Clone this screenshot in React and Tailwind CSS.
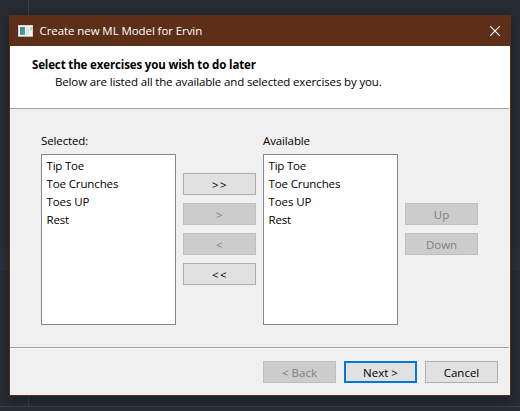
const exercises = ["Tip Toe", "Toe Crunches", "Toes UP", "Rest"];
const tracks = ["tracking-[-0.2px]", "tracking-[-0.12px]", "tracking-[-0.1px]", "tracking-[-0.2px]"];

function Button({ children, disabled, primary, arrows }) {
  const look = disabled
    ? "border border-[#bfbfbf] bg-[#cccccc] text-[#808080]"
    : primary
      ? "border-2 border-[#0078d7] bg-[#e1e1e1] text-black"
      : "border border-[#adadad] bg-[#e1e1e1] text-black";
  return (
    <button disabled={disabled} className={`flex h-[22px] w-[73px] shrink-0 items-center justify-center whitespace-pre leading-4 ${arrows ? "pl-px pt-[2px] tracking-[1.4px]" : "pt-px"} ${look}`}>
      {children}
    </button>
  );
}

function ExerciseList({ title }) {
  return (
    <section className="w-[135px] shrink-0">
      <h2 className="h-[21px] leading-4 tracking-[-0.12px]">{title}</h2>
      <ul className="h-[171px] border border-[#828790] bg-white pl-[4.5px] pt-[2px]">
        {exercises.map((name, i) => (
          <li key={name} className={`h-[18px] leading-[18px] ${tracks[i]}`}>{name}</li>
        ))}
      </ul>
    </section>
  );
}

function CloseIcon() {
  return (
    <svg width="10" height="10" viewBox="0 0 10 10" fill="none" stroke="#fff" strokeWidth="1.15">
      <path d="M0.3 0.3 9.7 9.7M9.7 0.3 0.3 9.7" />
    </svg>
  );
}

function AppIcon() {
  return (
    <svg width="15" height="12" viewBox="0 0 15 12">
      <defs>
        <linearGradient id="pane" x1="0" y1="0" x2="1" y2="1">
          <stop offset="0" stopColor="#4579a8" />
          <stop offset="1" stopColor="#4fb070" />
        </linearGradient>
      </defs>
      <path fill="#d5d8da" d="M0 0h15v12H0z" />
      <path fill="#f8f8f8" d="M1 1h13v10H1z" />
      <path fill="url(#pane)" d="M2 2h5v8H2z" />
      <path fill="#dce4e9" d="M8 2h3v8H8z" />
      <path fill="#b8d6cd" d="M12 2h2v3l-2 1z" />
      <path fill="#b5b8b9" d="M0 11h15v1H0z" />
    </svg>
  );
}

export default function App() {
  return (
    <div className="relative h-[411px] w-[520px] overflow-hidden bg-[#282c34] pl-[9px] pt-[15px] font-['Open_Sans',sans-serif] text-[11.5px] text-black">
      <div className="absolute left-0 top-[248px] h-[23px] w-full bg-[#2c313c]" />
      <div className="absolute left-[28px] top-0 h-[406px] w-px bg-[#3b4048]" />
      <div className="absolute left-0 top-[406px] h-[5px] w-full border-t border-[#3b4048] bg-[#282c34]" />

      <main className="relative flex h-[381px] w-[502px] flex-col border border-t-0 border-[#5d2e18] bg-[#f0f0f0] shadow-[0_3px_12px_1px_rgba(0,0,0,0.35)]">
        <header className="flex h-[31px] shrink-0 items-center bg-[#5d2e18] pl-2 pr-[10px] text-white">
          <AppIcon />
          <span className="ml-[6.5px] whitespace-nowrap tracking-[-0.08px]">Create new ML Model for Ervin</span>
          <button aria-label="Close" className="ml-auto">
            <CloseIcon />
          </button>
        </header>

        <div className="h-[62px] shrink-0 bg-white pl-[22px] pt-[11px]">
          <h1 className="h-[17px] whitespace-nowrap font-bold leading-4 tracking-[-0.14px]">Select the exercises you wish to do later</h1>
          <p className="whitespace-nowrap pl-[23px] leading-4 tracking-[-0.14px]">Below are listed all the available and selected exercises by you.</p>
        </div>

        <div className="mr-px flex h-[240px] shrink-0 gap-[7px] border-y border-[#a0a0a0] pl-[31px] pt-[24px]">
          <ExerciseList title="Selected:" />
          <div className="flex flex-col gap-2 pt-[40px]">
            <Button arrows>{">>"}</Button>
            <Button arrows disabled>{">"}</Button>
            <Button arrows disabled>{"<"}</Button>
            <Button arrows>{"<<"}</Button>
          </div>
          <ExerciseList title="Available" />
          <div className="flex flex-col gap-2 pt-[70px]">
            <Button disabled>Up</Button>
            <Button disabled>Down</Button>
          </div>
        </div>

        <footer className="flex flex-1 justify-end gap-2 border-t border-white pr-3 pt-3">
          <Button disabled>{"< Back"}</Button>
          <Button primary>{"Next >"}</Button>
          <Button>Cancel</Button>
        </footer>
      </main>
    </div>
  );
}
